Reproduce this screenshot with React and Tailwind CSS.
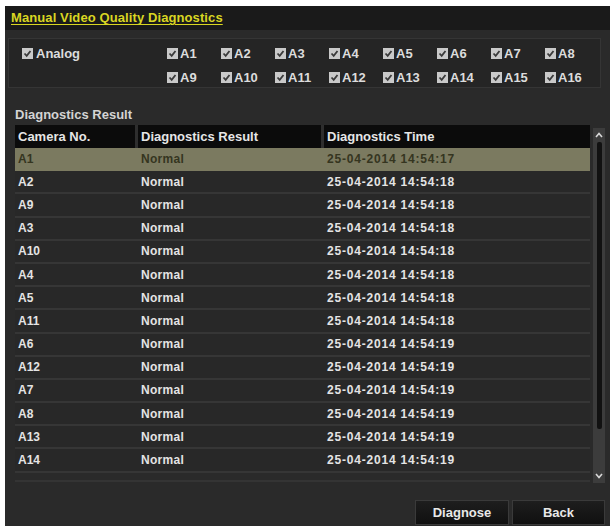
const channels = ['A1','A2','A3','A4','A5','A6','A7','A8','A9','A10','A11','A12','A13','A14','A15','A16'];

const rows = [
  ['A1', '25-04-2014 14:54:17'],
  ['A2', '25-04-2014 14:54:18'],
  ['A9', '25-04-2014 14:54:18'],
  ['A3', '25-04-2014 14:54:18'],
  ['A10', '25-04-2014 14:54:18'],
  ['A4', '25-04-2014 14:54:18'],
  ['A5', '25-04-2014 14:54:18'],
  ['A11', '25-04-2014 14:54:18'],
  ['A6', '25-04-2014 14:54:19'],
  ['A12', '25-04-2014 14:54:19'],
  ['A7', '25-04-2014 14:54:19'],
  ['A8', '25-04-2014 14:54:19'],
  ['A13', '25-04-2014 14:54:19'],
  ['A14', '25-04-2014 14:54:19'],
];

function Check() {
  return (
    <span className="w-[11px] h-[11px] bg-[#c9c9c9] flex items-center justify-center shrink-0">
      <svg width="9" height="9" viewBox="0 0 9 9">
        <path d="M1.5 4.5 L3.7 6.8 L7.5 2" fill="none" stroke="#3a3a3a" strokeWidth="1.8" />
      </svg>
    </span>
  );
}

function Arrow({ up }) {
  return (
    <div className="h-[14px] flex items-center justify-center">
      <svg width="8" height="6" viewBox="0 0 8 6">
        <path d={up ? 'M1 5 L4 1.5 L7 5' : 'M1 1 L4 4.5 L7 1'} fill="none" stroke="#d8d8d8" strokeWidth="1.6" />
      </svg>
    </div>
  );
}

export default function App() {
  return (
    <div className="w-[612px] h-[529px] bg-white pl-[5px] pt-[6px] pr-[2px] pb-[3px]" style={{ fontFamily: '"Liberation Sans", Arial, sans-serif' }}>
      <div className="w-full h-full bg-[#2a2a2a] flex flex-col">
        {/* title */}
        <div className="h-[24px] bg-[#1a1a1a] flex items-center pl-[6px]">
          <span className="text-[13px] font-bold text-[#d9d622] underline underline-offset-2 tracking-[0.1px]">Manual Video Quality Diagnostics</span>
        </div>

        {/* channel box */}
        <div className="ml-[3px] mt-[8px] w-[593px] h-[50px] bg-[#252525] border border-[#353535] flex">
          <div className="w-[158px] pl-[13px] pt-[9px] flex items-start gap-[3px]">
            <Check />
            <span className="text-[13px] font-bold text-[#dcdcdc] leading-[11px]">Analog</span>
          </div>
          <div className="grid grid-cols-8 w-[432px] pt-[9px] gap-y-[8px]">
            {channels.map((c) => (
              <div key={c} className="flex items-center gap-[2px] h-[11px]">
                <Check />
                <span className="text-[13px] font-bold text-[#dcdcdc] leading-[11px]">{c}</span>
              </div>
            ))}
          </div>
        </div>

        <div className="ml-[10px] mt-[20px] text-[13px] text-[#d4d4d4] font-bold leading-[14px]">Diagnostics Result</div>

        {/* table */}
        <div className="ml-[10px] mt-[3px] w-[590px] h-[358px] flex">
          <div className="w-[575px] flex flex-col">
            <div className="h-[23px] flex gap-[3px] bg-[#2e2e2e]">
              <div className="w-[120px] bg-[#0b0b0b] flex items-center pl-[3px] text-[13px] font-bold text-[#e6e6e6]">Camera No.</div>
              <div className="w-[183px] bg-[#0b0b0b] flex items-center pl-[3px] text-[13px] font-bold text-[#e6e6e6]">Diagnostics Result</div>
              <div className="flex-1 bg-[#0b0b0b] flex items-center pl-[3px] text-[13px] font-bold text-[#e6e6e6]">Diagnostics Time</div>
            </div>
            {rows.map(([cam, time], i) => (
              <div
                key={cam}
                className={`h-[23.2px] flex items-center border-b-2 text-[12px] font-bold ${i === 0 ? 'bg-[#7b7a60] border-[#7b7a60] text-[#35351f]' : 'bg-[#282828] border-[#363636] text-[#e4e4e4]'}`}
              >
                <div className="w-[123px] pl-[3px]">{cam}</div>
                <div className="w-[186px] pl-[3px] tracking-[0.3px]">Normal</div>
                <div className="flex-1 pl-[3px] tracking-[0.8px]">{time}</div>
              </div>
            ))}
            <div className="mt-[7px] h-[2px] bg-[#343434]" />
          </div>
          <div className="ml-[3px] w-[12px] mt-[3px] bg-[#3c3c3c] flex flex-col">
            <Arrow up />
            <div className="mx-auto w-[5px] h-[287px] bg-[#111111] rounded-[2px]" />
            <div className="flex-1" />
            <Arrow />
          </div>
        </div>

        {/* buttons */}
        <div className="mt-[17px] flex justify-end gap-[3px] pr-[5px]">
          <button className="w-[94px] h-[25px] bg-gradient-to-b from-[#1e1e1e] to-[#101010] border border-[#3a3a3a] text-[13px] font-bold text-[#e8e8e8]">Diagnose</button>
          <button className="w-[93px] h-[25px] bg-gradient-to-b from-[#1e1e1e] to-[#101010] border border-[#3a3a3a] text-[13px] font-bold text-[#e8e8e8]">Back</button>
        </div>
      </div>
    </div>
  );
}
